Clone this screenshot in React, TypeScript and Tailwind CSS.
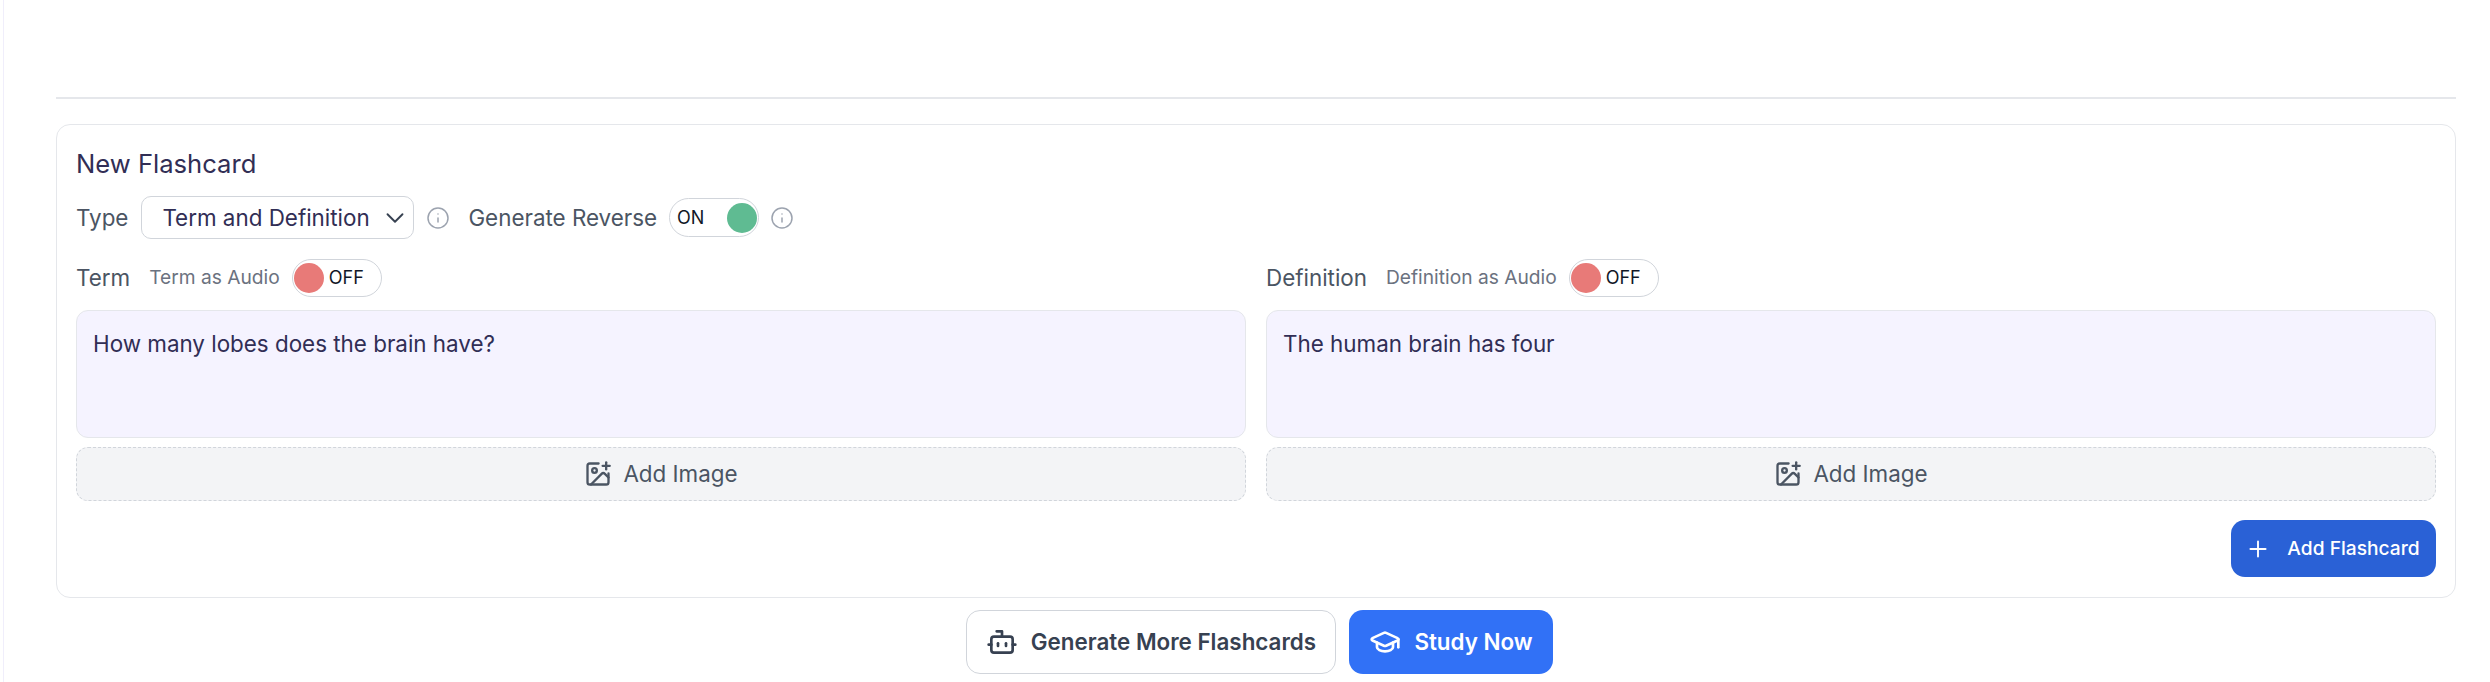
import React from 'react';
import { Bot, ChevronDown, GraduationCap, ImagePlus, Info, Plus } from 'lucide-react';

const Toggle: React.FC<{ on: boolean }> = ({ on }) => (
  <div
    className={`flex items-center border border-[#d1d5db] rounded-full bg-white shrink-0 ${
      on ? 'w-[90px] h-[39px] justify-between pl-[7px] pr-[1px]' : 'w-[90px] h-[38px] pl-[1px]'
    }`}
  >
    {on ? (
      <>
        <span className="text-[18px] leading-none text-[#111827]">ON</span>
        <span className="w-[30px] h-[30px] rounded-full bg-[#5fbb92]" />
      </>
    ) : (
      <>
        <span className="w-[30px] h-[30px] rounded-full bg-[#e87a78]" />
        <span className="ml-[5px] text-[18px] leading-none text-[#111827]">OFF</span>
      </>
    )}
  </div>
);

const Side: React.FC<{ label: string; audioLabel: string; value: string }> = ({ label, audioLabel, value }) => (
  <div className="flex-1 min-w-0">
    <div className="flex items-center h-[39px]">
      <span className="text-[22.4px] text-[#4b5563]">{label}</span>
      <span className="ml-[19px] mr-[12px] text-[19.2px] text-[#6b7280]">{audioLabel}</span>
      <Toggle on={false} />
    </div>
    <div className="mt-[13px] h-[128px] rounded-[12px] border border-[#e5e7eb] bg-[#f5f3ff] px-[16px] py-[18px] text-[22.4px] leading-[30px] text-[#312e55]">
      {value}
    </div>
    <button className="mt-[9px] w-full h-[54px] rounded-[12px] border border-dashed border-[#d1d5db] bg-[#f3f4f6] flex items-center justify-center gap-[11px] text-[22.4px] text-[#4b5563]">
      <ImagePlus className="w-[28px] h-[28px]" strokeWidth={2} />
      <span>Add Image</span>
    </button>
  </div>
);

export default function App() {
  return (
    <div className="h-[682px] bg-white font-['Inter',sans-serif] overflow-hidden">
      <div className="h-full ml-[3px] border-l border-[#f0eefb] pl-[52px] pr-[34px]">
        <div className="h-[99px] border-b-2 border-[#e5e7eb]" />

        <div className="mt-[25px] h-[474px] rounded-[14px] border border-[#e5e7eb] bg-white pl-[19px] pr-[19px] pt-[21px]">
          <h2 className="text-[25.6px] leading-[36px] text-[#312e55]">New Flashcard</h2>

          <div className="mt-[14px] flex items-center h-[43px]">
            <span className="text-[22.4px] text-[#4b5563]">Type</span>
            <button className="ml-[13px] w-[273px] h-[43px] rounded-[10px] border border-[#d1d5db] bg-white flex items-center justify-between pl-[20px] pr-[3px] text-[22.4px] text-[#312e55]">
              <span>Term and Definition</span>
              <ChevronDown className="w-[30px] h-[30px] text-[#374151]" strokeWidth={1.5} />
            </button>
            <Info className="ml-[12px] w-[24px] h-[24px] text-[#9ca3af]" strokeWidth={1.5} />
            <span className="ml-[18px] mr-[12px] text-[22.4px] text-[#4b5563]">Generate Reverse</span>
            <Toggle on={true} />
            <Info className="ml-[11px] w-[24px] h-[24px] text-[#9ca3af]" strokeWidth={1.5} />
          </div>

          <div className="mt-[19px] flex gap-[20px]">
            <Side label="Term" audioLabel="Term as Audio" value="How many lobes does the brain have?" />
            <Side label="Definition" audioLabel="Definition as Audio" value="The human brain has four" />
          </div>

          <div className="mt-[19px] flex justify-end">
            <button className="w-[205px] h-[57px] rounded-[14px] bg-[#2a61d6] flex items-center justify-center gap-[16px] pr-[2px] text-[19.2px] font-medium text-white">
              <Plus className="w-[26px] h-[26px]" strokeWidth={1.75} />
              <span>Add Flashcard</span>
            </button>
          </div>
        </div>

        <div className="mt-[12px] ml-[7px] flex justify-center gap-[13px]">
          <button className="w-[370px] h-[64px] rounded-[14px] border border-[#d1d5db] bg-white flex items-center justify-center gap-[13px] text-[22.4px] font-semibold text-[#374151]">
            <Bot className="w-[32px] h-[32px]" strokeWidth={2} />
            <span>Generate More Flashcards</span>
          </button>
          <button className="w-[204px] h-[64px] rounded-[14px] bg-[#3171f6] flex items-center justify-center gap-[13px] text-[22.4px] font-semibold text-white">
            <GraduationCap className="w-[32px] h-[32px]" strokeWidth={2} />
            <span>Study Now</span>
          </button>
        </div>
      </div>
    </div>
  );
}
